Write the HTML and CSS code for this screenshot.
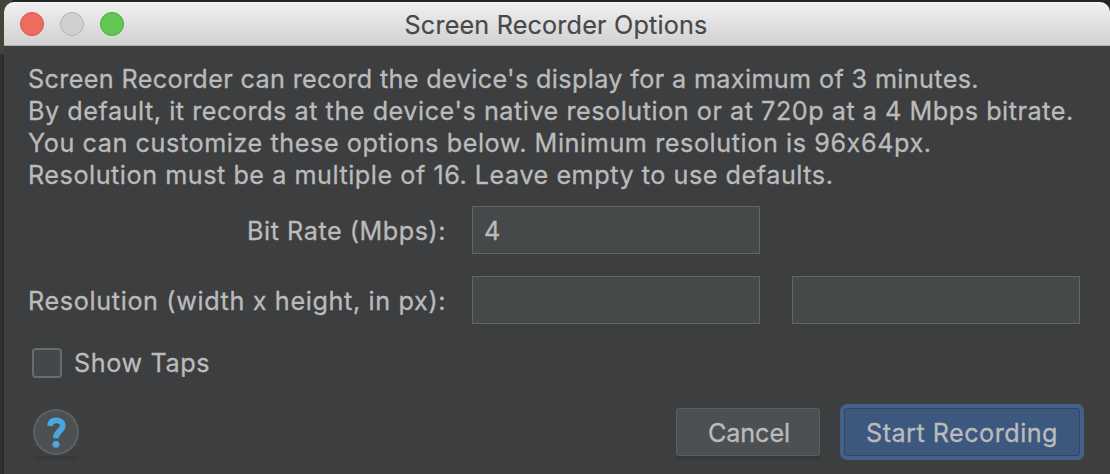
FILE: index.html
```html
<!DOCTYPE html>
<html lang="en">
<head>
<meta charset="utf-8">
<title>Screen Recorder Options</title>
<link rel="stylesheet" href="styles.css">
</head>
<body>
<main class="window">
  <header class="titlebar">
    <div class="lights">
      <span class="light light-close"></span>
      <span class="light light-minimize"></span>
      <span class="light light-zoom"></span>
    </div>
    <h1 class="title">Screen Recorder Options</h1>
  </header>
  <form class="content">
    <div class="intro">
      <p class="line line-limit">Screen Recorder can record the device's display for a maximum of 3 minutes.</p>
      <p class="line line-default">By default, it records at the device's native resolution or at 720p at a 4 Mbps bitrate.</p>
      <p class="line line-custom">You can customize these options below. Minimum resolution is 96x64px.</p>
      <p class="line line-multiple">Resolution must be a multiple of 16. Leave empty to use defaults.</p>
    </div>
    <div class="fields">
      <label class="label label-rate" for="rate">Bit Rate (Mbps):</label>
      <input class="field" id="rate" type="text" value="4">
      <span></span>
      <label class="label label-size" for="width">Resolution (width x height, in px):</label>
      <input class="field" id="width" type="text">
      <input class="field" id="height" type="text" aria-label="Height">
    </div>
    <label class="taps"><input class="checkbox" type="checkbox"><span class="taps-text">Show Taps</span></label>
    <footer class="actions">
      <div class="help-slot">
        <button class="help" type="button" aria-label="Help">
          <svg class="help-icon" viewBox="0 0 21 31" width="21" height="31">
            <path d="M4 8.9C4.3 5.3 6.7 3.4 10.3 3.4c3.9 0 6.4 2 6.4 5.2 0 2.4-1.3 3.9-3.3 5.6-2.4 2-3.3 3.3-3.3 7" fill="none" stroke="#48a6e0" stroke-width="5.8"/>
            <circle cx="10" cy="27.3" r="3.5" fill="#48a6e0"/>
          </svg>
        </button>
      </div>
      <button class="button button-cancel" type="button">Cancel</button>
      <button class="button button-start" type="button">Start Recording</button>
    </footer>
  </form>
</main>
</body>
</html>
```

FILE: styles.css
```css
* { box-sizing: border-box; }

body {
  margin: 0;
  height: 474px;
  padding: 2px 0 0 4px;
  overflow: hidden;
  background:
    linear-gradient(#46433a, #46433a) 0 0 / 12px 54px no-repeat,
    linear-gradient(90deg, #303132 3px, #252627 3px 4px, #242424 4px);
  font-family: Inter, "Liberation Sans", sans-serif;
  font-size: 25.2px;
  font-feature-settings: "calt" 0;
  color: #bbb;
}

.window {
  height: 472px;
  background: #3d3e40;
  border-radius: 10px 10px 0 0;
  overflow: hidden;
}

.titlebar {
  display: grid;
  grid-template-columns: 1fr auto 1fr;
  align-items: center;
  height: 44px;
  padding-right: 2px;
  background: linear-gradient(#f0f0f0, #d1d1d1);
  border-top: 1px solid #f7f7f7;
  border-bottom: 1px solid #b0b0b0;
}

.lights { display: flex; gap: 16px; padding-left: 16px; }
.light { width: 24px; height: 24px; border: 1px solid; border-radius: 50%; }
.light-close { background: #ee6b5f; border-color: #dc5147; }
.light-minimize { background: #d0d0d0; border-color: #b3b3b3; }
.light-zoom { background: #62c654; border-color: #45ad37; }

.title {
  margin: 0;
  padding-top: 1px;
  font-size: 25.2px;
  font-weight: 400;
  line-height: 32px;
  letter-spacing: 0.17px;
  color: #484848;
  -webkit-text-stroke: 0.2px;
  white-space: nowrap;
}

.content {
  padding: 17px 30px 0 24px;
  letter-spacing: 0.53px;
  -webkit-text-stroke: 0.3px;
}
.line { margin: 0; line-height: 32px; white-space: nowrap; }
.line-limit { letter-spacing: 0.36px; }
.line-custom { letter-spacing: 0.575px; }

.fields {
  display: grid;
  grid-template-columns: 444px 320px 288px;
  row-gap: 22px;
  margin-top: 15px;
}
.label { height: 48px; width: 418px; line-height: 50px; text-align: right; white-space: nowrap; }
.label-size { letter-spacing: 0.64px; }
.field {
  width: 288px;
  height: 48px;
  padding: 2px 0 0 11px;
  border: 1px solid #646464;
  border-radius: 0;
  background: #45494a;
  color: #bbb;
  font: inherit;
  -webkit-text-stroke: 0.3px;
}

.taps { display: flex; align-items: center; gap: 12px; height: 32px; margin-top: 23px; padding-left: 4px; }
.checkbox {
  appearance: none;
  width: 30px;
  height: 30px;
  margin: 0;
  border: 2px solid #6b6b6b;
  border-radius: 4px;
  background: #43494a;
}
.taps-text { line-height: 32px; letter-spacing: 0.6px; }

.actions { display: flex; align-items: flex-start; margin-top: 25px; padding-left: 5px; }
.help-slot {
  width: 46px;
  height: 51px;
  margin: 5px auto 0 0;
  background: linear-gradient(#38393a, #38393a) 1px 100% / 44px 4px no-repeat;
}
.help {
  display: grid;
  place-items: center;
  width: 46px;
  height: 46px;
  padding: 0 0 0 1px;
  border: 2px solid #5e6060;
  border-radius: 50%;
  background: #4c5052;
}
.button {
  height: 48px;
  margin-top: 4px;
  padding: 2px 0 0;
  border: 1px solid #5e6060;
  border-radius: 3px;
  color: #bbb;
  font: inherit;
  -webkit-text-stroke: 0.3px;
  white-space: nowrap;
}
.button-cancel {
  width: 144px;
  margin-right: 24px;
  padding-left: 2px;
  background: #4c5052;
  box-shadow: 0 4px 0 #38393a;
  letter-spacing: -0.1px;
}
.button-start {
  width: 236px;
  background: #3c587e;
  border-color: #34465e;
  box-shadow: 0 0 0 4px #426289;
  letter-spacing: 0.48px;
}
```
